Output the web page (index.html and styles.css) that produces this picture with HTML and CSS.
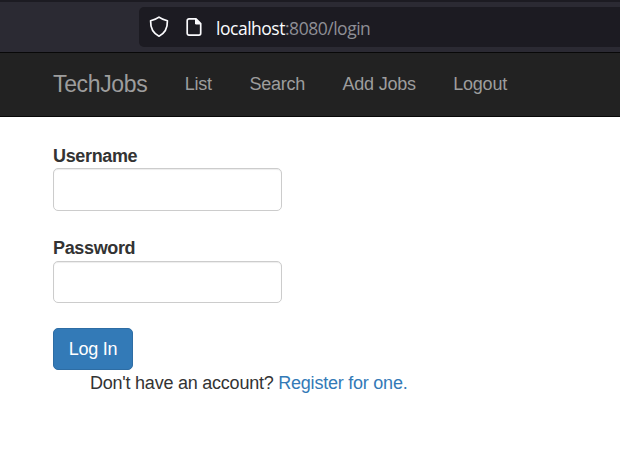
FILE: index.html
```html
<!DOCTYPE html>
<html lang="en">
<head>
<meta charset="utf-8">
<title>TechJobs</title>
<link rel="stylesheet" href="styles.css">
</head>
<body>
<div class="toolbar">
  <div class="address">
    <svg class="shield" width="20" height="22" viewBox="0 0 20 22"><path d="M10 1.200C8 2.800 5 3.900 1.600 4.800 1.400 11.500 3.500 17 10 20.200 16.500 17 18.600 11.500 18.400 4.800 15 3.900 12 2.800 10 1.200Z"/></svg>
    <svg class="page" width="16" height="20" viewBox="0 0 16 20"><path d="M3 1.900h7L14.700 6.600V16.300a1.800 1.800 0 0 1-1.800 1.800H3A1.800 1.800 0 0 1 1.200 16.300V3.700A1.800 1.800 0 0 1 3 1.900Z"/><path class="fold" d="M9.500 1.900V7h5Z"/></svg>
    <span class="url"><b>localhost</b>:8080/login</span>
  </div>
</div>
<nav class="navbar">
  <a class="brand">TechJobs</a>
  <a>List</a><a>Search</a><a>Add Jobs</a><a>Logout</a>
</nav>
<main>
  <form>
    <label for="username">Username</label>
    <input id="username" type="text">
    <label for="password">Password</label>
    <input id="password" class="password" type="password">
    <button type="button">Log In</button>
  </form>
  <p>Don't have an account? <a>Register for one.</a></p>
</main>
</body>
</html>
```

FILE: styles.css
```css
* { box-sizing: border-box; }
body { margin: 0; background: #fff; color: #333; font: 18px/25px "Liberation Sans", Arial, sans-serif; letter-spacing: -.23px; }
.toolbar { height: 52px; padding: 5px 0 0 139px; background: #2b2a33; border-top: 2px solid #1c1b22; }
.address { display: flex; align-items: center; height: 40px; padding-left: 10px; background: #1c1b22; border-radius: 5px 0 0 5px; }
.address svg { fill: none; stroke: #fbfbfe; stroke-width: 1.700; stroke-linejoin: round; }
.address .fold { fill: #fbfbfe; stroke-width: 1; }
.page { margin-left: 17px; }
.url { margin: 2px 0 0 14px; color: #8f8f96; font: 17.500px/24px "Open Sans", sans-serif; letter-spacing: -.48px; }
.url b { color: #fbfbfe; font-weight: 400; }
.navbar { display: flex; align-items: center; height: 65px; padding-left: 53px; background: #222; border: solid #080808; border-width: 1px 0; color: #9d9d9d; gap: 37.500px; }
.brand { font-size: 23px; letter-spacing: -.36px; }
main { padding: 27px 53px; }
form { display: flex; flex-direction: column; align-items: flex-start; }
label { font-weight: 700; line-height: 24px; letter-spacing: -.35px; }
input { width: 229px; height: 43px; margin-bottom: 25px; border: 1px solid #ccc; border-radius: 5px; box-shadow: inset 0 1px 1px rgba(0,0,0,.075); }
.password { height: 42px; margin-top: 1px; }
button { width: 80px; height: 42px; padding: 0; color: #fff; background: #337ab7; border: 1px solid #2e6da4; border-radius: 5px; font: inherit; letter-spacing: inherit; }
p { margin: 1px 0 0 37px; }
p a { color: #337ab7; }
```
